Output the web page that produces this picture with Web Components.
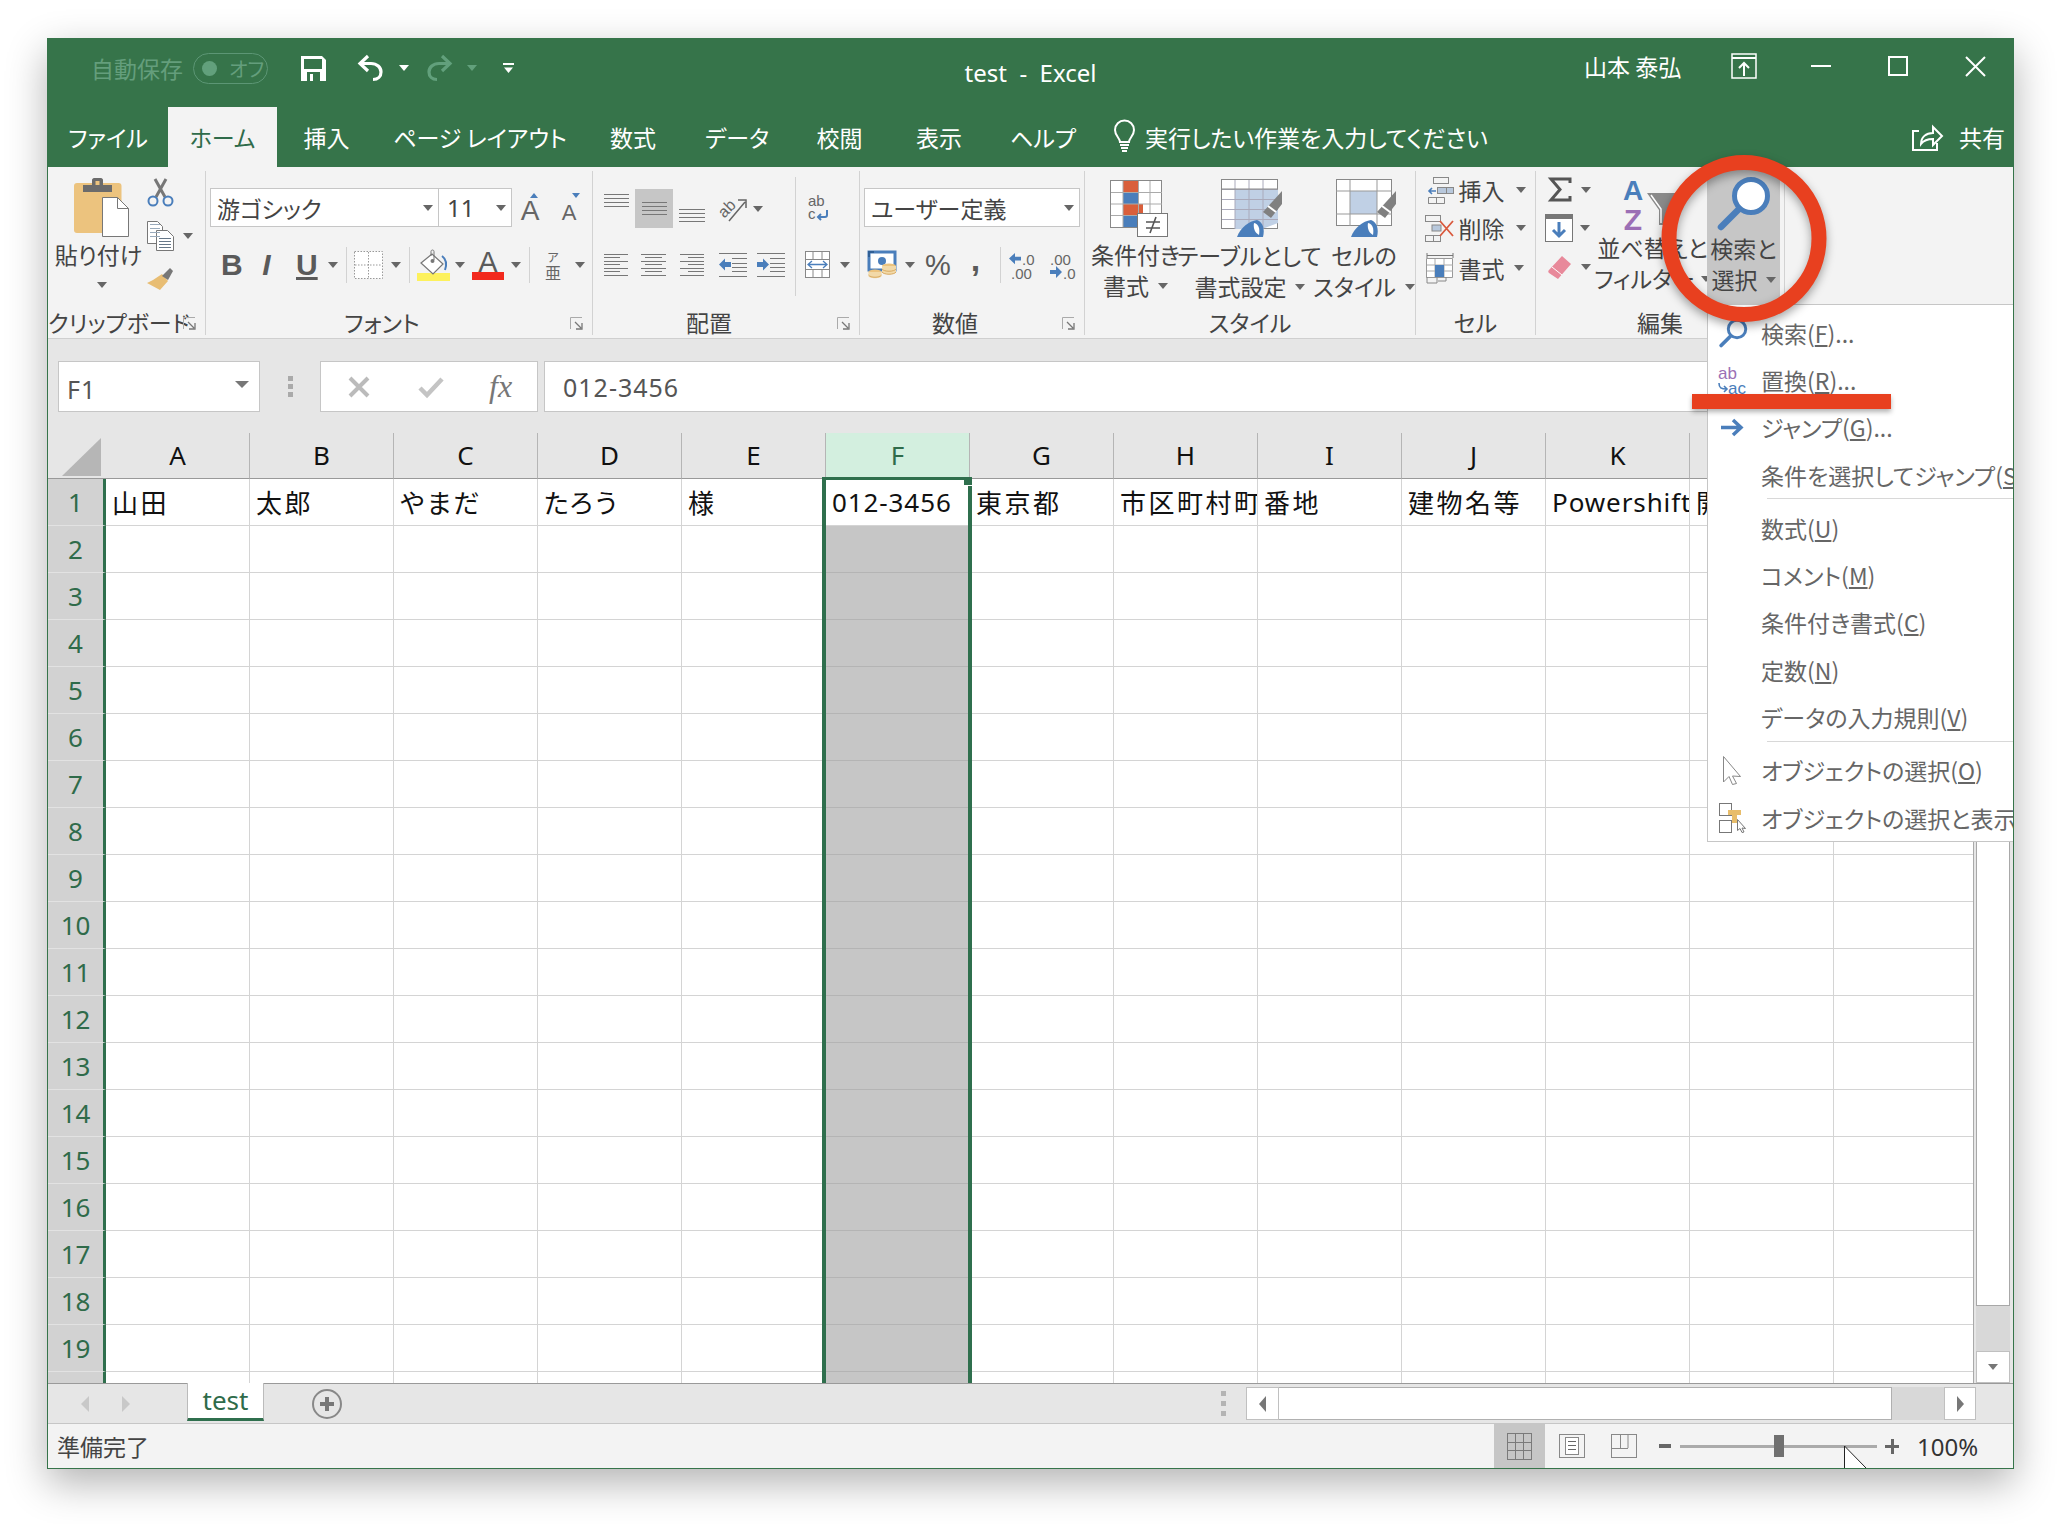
<!DOCTYPE html>
<html lang="ja">
<head>
<meta charset="utf-8">
<title>test - Excel</title>
<style>
html,body{margin:0;height:1524px;overflow:hidden;background:#fff}
body{padding:38px 0 0 47px;box-sizing:border-box;font-family:"Noto Sans CJK JP","Noto Sans",sans-serif;font-feature-settings:"palt";color:#444}
</style>
</head>
<body>
<xl-window>
  <xl-titlebar></xl-titlebar>
  <xl-tabs></xl-tabs>
  <xl-ribbon></xl-ribbon>
  <xl-formula></xl-formula>
  <xl-sheet></xl-sheet>
  <xl-sheettabs></xl-sheettabs>
  <xl-status></xl-status>
  <xl-menu>
    <xl-menu-item icon="mfind">検索(<u>F</u>)...</xl-menu-item>
    <xl-menu-item icon="mrepl">置換(<u>R</u>)...</xl-menu-item>
    <xl-menu-item icon="mjump">ジャンプ(<u>G</u>)...</xl-menu-item>
    <xl-menu-item>条件を選択してジャンプ(<u>S</u>)...</xl-menu-item>
    <xl-menu-sep></xl-menu-sep>
    <xl-menu-item>数式(<u>U</u>)</xl-menu-item>
    <xl-menu-item>コメント(<u>M</u>)</xl-menu-item>
    <xl-menu-item>条件付き書式(<u>C</u>)</xl-menu-item>
    <xl-menu-item>定数(<u>N</u>)</xl-menu-item>
    <xl-menu-item>データの入力規則(<u>V</u>)</xl-menu-item>
    <xl-menu-sep></xl-menu-sep>
    <xl-menu-item icon="mcursor">オブジェクトの選択(<u>O</u>)</xl-menu-item>
    <xl-menu-item icon="mpane">オブジェクトの選択と表示(<u>P</u>)...</xl-menu-item>
  </xl-menu>
  <xl-marks></xl-marks>
</xl-window>

<script>
const BLUE = '#4a7ebb', GR = '#777', DK = '#5a5a5a'
const lines = (w, ys, x = 0, c = GR) => ys.map(y => `<path d="M${x} ${y}.5h${w}" stroke="${c}"/>`).join('')
const brush = `<path d="M61 12v13L50 39l-8-6z" fill="#808080"/><path d="M47 27l8 6" stroke="#fff" stroke-width="2"/><path d="M16 58c3-9 12-16 20-17 6 2 8 9 6 17z" fill="${BLUE}"/><path d="M33 44c5 1 6 6 5 12-4-2-6-7-5-12z" fill="#fff"/>`

// icon name -> [width, height, svg body]
const ICONS = {
  save: [25, 25, `<path d="M0 0h21l4 4v21H0z" fill="#fff"/><rect x="3" y="3" width="18" height="10" fill="#36744a"/><rect x="6" y="16" width="13" height="9" fill="#36744a"/><rect x="9" y="18" width="3" height="7" fill="#fff"/>`],
  undo: [27, 26, `<path d="M11 1L3 8.5 11 16M3 8.5h11c6 0 10 4 10 8.500s-3 7.500-8 7.500" fill="none" stroke="#fff" stroke-width="3.200"/>`],
  redo: [27, 26, `<path d="M16 1l8 7.500L16 16M24 8.500H13c-6 0-10 4-10 8.500s3 7.500 8 7.500" fill="none" stroke="#62a07c" stroke-width="3.200"/>`],
  custom: [11, 10, `<rect width="11" height="2" fill="#fff"/><path d="M1 4.500h9L5.500 10z" fill="#fff"/>`],
  rdisp: [26, 26, `<rect x="1" y="1" width="24" height="24" fill="none" stroke="#fff" stroke-width="1.500"/><path d="M1 5h24" stroke="#fff" stroke-width="2"/><path d="M13 23V11M8 15l5-5 5 5" fill="none" stroke="#fff" stroke-width="2"/>`],
  wmin: [20, 20, `<path d="M0 10h20" stroke="#fff" stroke-width="2"/>`],
  wmax: [20, 20, `<rect x="1" y="1" width="18" height="18" fill="none" stroke="#fff" stroke-width="2"/>`],
  wclose: [21, 21, `<path d="M1 1l19 19M20 1L1 20" stroke="#fff" stroke-width="2"/>`],
  bulb: [23, 32, `<path d="M7 22c0-4-5-6-5-12a9.500 9.500 0 0 1 19 0c0 6-5 8-5 12z" fill="none" stroke="#fff" stroke-width="2"/><path d="M7 25h9M8 28h7M9 31h5" stroke="#fff" stroke-width="2"/>`],
  share: [31, 28, `<path d="M7 8H1v19h24v-7" fill="none" stroke="#fff" stroke-width="2"/><path d="M9 21c0-7 5-11 12-11V4l9 9-9 9v-6c-5 0-9 1-12 5z" fill="none" stroke="#fff" stroke-width="2"/>`],
  paste: [55, 60, `<rect y="6" width="47.500" height="50" rx="3" fill="#ecc37e"/><path d="M9 15V8h9V3c0-1 1-2 2-2h7c1 0 2 1 2 2v5h9v7z" fill="#6b6b6b"/><rect x="21.500" y="4" width="4" height="4" fill="#ecc37e"/><path d="M28.500 20.500h15l11 11v28h-26z" fill="#fff" stroke="#777"/><path d="M43.500 20.500v11h11" fill="none" stroke="#777"/>`],
  scissors: [27, 28, `<path d="M8 0l10 18M19 0L9 18" stroke="#777" stroke-width="3"/><circle cx="6" cy="22" r="4.500" fill="none" stroke="${BLUE}" stroke-width="2"/><circle cx="21" cy="22" r="4.500" fill="none" stroke="${BLUE}" stroke-width="2"/>`],
  copy: [27, 30, `<path d="M.5.500h10l5 5v17H.5z" fill="#fff" stroke="#777"/><path d="M9.500 9.500h11l6 6v14h-17z" fill="#fff" stroke="#777"/>${lines(10, [3, 7, 11, 15], 3, '#9ab')}${lines(12, [17, 20, 23, 26], 12, '#678')}`],
  brush: [26, 22, `<path d="M15 6l6 7-8 9-13-7 6-3z" fill="#e8bd73"/><path d="M15 8l8-8 3 3-5 9z" fill="#777"/>`],
  launcher: [13, 13, `<path d="M.5 12V.5H12" fill="none" stroke="#aaa"/><path d="M5 5l6 6M12 6v6H6" fill="none" stroke="#777" stroke-width="1.300"/>`],
  agrow: [24, 30, `<text x="8" y="27" font-family="Liberation Sans" font-size="28" text-anchor="middle" fill="#666">A</text><path d="M12 5h8l-4-5z" transform="translate(-4 0)" fill="${BLUE}"/>`],
  ashrink: [20, 30, `<text x="6" y="27" font-family="Liberation Sans" font-size="22" text-anchor="middle" fill="#666">A</text><path d="M9 0h8l-4 5z" fill="${BLUE}"/>`],
  borders: [29, 28, `<rect x=".5" y=".5" width="28" height="27" fill="#fff" stroke="#999" stroke-dasharray="1.500 1.500"/><path d="M14.500 1v26M1 14h27" stroke="#999" stroke-dasharray="1.500 1.500"/>`],
  fill: [33, 32, `<rect y="24" width="33" height="8" fill="#fdf15c"/><path d="M4 14L15 5l11 10-10 10z" fill="#fff" stroke="#777" stroke-width="1.200"/><path d="M14 7V2.500c0-2 3-2 3 0V11" fill="none" stroke="#777"/><circle cx="15.500" cy="12" r="2" fill="#777"/><path d="M25 7c4 3 5 8 3 14" fill="none" stroke="${BLUE}" stroke-width="2"/>`],
  acolor: [32, 29, `<text x="16" y="21" font-family="Liberation Sans" font-size="29" text-anchor="middle" fill="#5a5a5a">A</text><rect y="21" width="32" height="8" fill="#f2291d"/>`],
  furi: [14, 27, `<text x="7" y="10" font-family="Noto Sans CJK JP" font-size="12" text-anchor="middle" fill="#666">ア</text><text x="7" y="27" font-family="Noto Sans CJK JP" font-size="16" text-anchor="middle" fill="#666">亜</text>`],
  atop: [25, 39, lines(25, [5, 9, 13, 17])],
  amid: [25, 39, lines(25, [13, 17, 21, 25])],
  abot: [26, 39, lines(26, [20, 24, 28, 32])],
  aleft: [24, 23, lines(24, [0, 7, 14, 21]) + lines(16, [3, 10, 17])],
  acenter: [25, 23, lines(25, [0, 7, 14, 21]) + lines(17, [3, 10, 17], 4)],
  aright: [24, 23, lines(24, [0, 7, 14, 21]) + lines(16, [3, 10, 17], 8)],
  outdent: [28, 24, lines(28, [0, 23]) + lines(15, [5, 10, 14, 18], 13) + `<path d="M0 11.500l6-6v3.500h6v5H6v3.500z" fill="${BLUE}"/>`],
  indent: [28, 24, lines(28, [0, 23]) + lines(15, [5, 10, 14, 18], 13) + `<path d="M12 11.500l-6-6v3.500H0v5h6v3.500z" fill="${BLUE}"/>`],
  orient: [28, 28, `<text x="2" y="20" font-family="Liberation Sans" font-size="16" fill="#666" transform="rotate(-45 8 18)">ab</text><path d="M10 26L26 7M19 5h8v8" fill="none" stroke="#666" stroke-width="1.500"/>`],
  wrap: [20, 25, `<text x="0" y="11" font-family="Liberation Sans" font-size="15" fill="#666">ab</text><text x="0" y="24" font-family="Liberation Sans" font-size="15" fill="#666">c</text><path d="M19 15v5c0 1-1 2-2 2h-7M13 19l-3 3 3 3" fill="none" stroke="${BLUE}" stroke-width="2"/>`],
  merge: [25, 27, `<rect x=".5" y=".5" width="24" height="26" fill="#fff" stroke="#888"/><path d="M1 8.500h24M1 18.500h24M8 1v7M17 1v7M8 19v7M17 19v7" stroke="#888"/><path d="M3 13.500h19M7 10l-4 3.500L7 17M18 10l4 3.500-4 3.500" fill="none" stroke="${BLUE}" stroke-width="1.300"/>`],
  currency: [29, 28, `<rect x="1" y="1" width="26" height="18" fill="#fff" stroke="${BLUE}" stroke-width="3"/><circle cx="14" cy="10" r="4" fill="${BLUE}"/><path d="M6 1h-5v5M22 19h5v-5" fill="none" stroke="#2f5f95" stroke-width="2"/><ellipse cx="21" cy="15" rx="7" ry="2.500" fill="#ecc37e"/><path d="M14 15v6c0 3 14 3 14 0v-6" fill="#f2d9a8"/><path d="M14 18c2 3 12 3 14 0M14 21c2 3 12 3 14 0" fill="none" stroke="#d8aa62"/><ellipse cx="7" cy="21" rx="6.500" ry="2.500" fill="#ecc37e"/><path d="M.5 21v4c0 3 13 3 13 0v-4" fill="#f2d9a8"/><path d="M.5 24c2 3 11 3 13 0" fill="none" stroke="#d8aa62"/>`],
  incdec: [28, 28, `<path d="M0 8l6-6v4h6v4H6v4z" fill="${BLUE}" transform="scale(1 .95)"/><text x="13" y="14" font-family="Liberation Sans" font-size="15" fill="#666">.0</text><text x="2" y="28" font-family="Liberation Sans" font-size="15" fill="#666">.00</text>`],
  decdec: [25, 28, `<text x="0" y="14" font-family="Liberation Sans" font-size="15" fill="#666">.00</text><path d="M0 19h6v-4l6 6-6 6v-4H0z" fill="${BLUE}"/><text x="13" y="28" font-family="Liberation Sans" font-size="15" fill="#666">.0</text>`],
  cond: [58, 57, `<rect x=".5" y=".5" width="51" height="47" fill="#fff" stroke="#888"/><rect x="13" y="1" width="15" height="11.500" fill="#d95f3b"/><rect x="13" y="12.500" width="15" height="11.500" fill="${BLUE}"/><rect x="13" y="24" width="20" height="11.500" fill="#d95f3b"/><rect x="13" y="35.500" width="15" height="11.500" fill="${BLUE}"/><path d="M13 1v46M28.500 1v46M40 1v33M1 12.500h51M1 24h51M1 35.500h51" stroke="#aaa"/><rect x="27.500" y="33.500" width="30" height="23" fill="#fff" stroke="#777"/><path d="M36 42h14M36 48h14M46 37l-6 16" stroke="#555" stroke-width="1.600"/>`],
  tbl: [61, 58, `<rect x=".5" y=".5" width="56" height="49" fill="#fff" stroke="#888"/><path d="M14 10h43v34L41 50H14z" fill="#c0d0e5"/><path d="M14 1v49M28 1v49M42 1v49M1 10.500h56M1 20.500h56M1 30.500h56M1 40.500h56" stroke="#aab" /><path d="M1 10h56" stroke="#888"/>${brush}`],
  cellst: [60, 59, `<g transform="translate(-1 1)"><rect x="1.500" y=".5" width="55" height="46" fill="#fff" stroke="#888"/><rect x="15" y="12" width="27" height="23" fill="#c0d0e5"/><path d="M15 1v46M42 1v46M1 12h56M1 35h56" stroke="#999"/>${brush}</g>`],
  cins: [26, 27, `<g fill="none" stroke="#888"><rect x="5.500" y=".5" width="15" height="6"/><rect x="18.500" y="10.500" width="7" height="6" fill="#b8c8dc"/><rect x="9.500" y="10.500" width="9" height="6" fill="#b8c8dc"/><path d="M.5 20.500h16v6H.5zM8.500 20.500v6M.5 26.500h16"/></g><path d="M8 14H1M4 11l-3 3 3 3" fill="none" stroke="${BLUE}" stroke-width="1.600"/>`],
  cdel: [30, 27, `<g fill="none" stroke="#888"><rect x=".5" y=".5" width="15" height="6"/><rect x=".5" y="20.500" width="15" height="6"/><path d="M8.500 20.500v6"/></g><rect x="7" y="10" width="9" height="6" fill="#b8c8dc" stroke="#888"/><path d="M15 6l13 15M28 6L15 21" stroke="#d9593d" stroke-width="1.800"/>`],
  cfmt: [28, 31, `<path d="M.5 5.500h26v19h-26z" fill="#fff" stroke="#999"/><path d="M9 6v18M18 6v18M1 12h26M1 18h26" stroke="#aaa"/><rect x="9" y="12" width="9" height="12" fill="${BLUE}"/><path d="M1 2.500h26M1 0v5M27 0v5" stroke="#777"/><path d="M1 24v6h10v-6M12 28h8v-4" fill="none" stroke="#888"/>`],
  sum: [23, 25, `<path d="M22 6V2H3l9 10.500L3 23h19v-4" fill="none" stroke="#555" stroke-width="3"/>`],
  fdown: [28, 28, `<rect x=".5" y=".5" width="27" height="27" fill="#fff" stroke="#777"/><rect width="28" height="5" fill="#777"/><path d="M14 8v14M8 16l6 6 6-6" fill="none" stroke="${BLUE}" stroke-width="3"/>`],
  eraser: [23, 23, `<path d="M14 0l9 8-13 15-9-6c-1-1-1-2 0-3z" fill="#e8899a"/><path d="M4 11l10 8" stroke="#fff"/>`],
  sortf: [57, 50, `<text x="10" y="20" font-family="Liberation Sans" font-weight="bold" font-size="28" text-anchor="middle" fill="${BLUE}">A</text><text x="10" y="50" font-family="Liberation Sans" font-weight="bold" font-size="30" text-anchor="middle" fill="#9b6fb5">Z</text><path d="M24 13h33L45 30v15H36V30z" fill="#8a8a8a"/><path d="M28 15l10 14v14" fill="none" stroke="#fff" stroke-width="1.500"/>`],
  find: [53, 53, `<circle cx="34" cy="19" r="16.500" fill="#fff" stroke="${BLUE}" stroke-width="5"/><path d="M22 32L4 50" stroke="${BLUE}" stroke-width="6.500" stroke-linecap="round"/>`],
  mfind: [28, 28, `<g transform="scale(.53)"><circle cx="34" cy="19" r="16.500" fill="#fff" stroke="${BLUE}" stroke-width="5.500"/><path d="M22 32L4 50" stroke="${BLUE}" stroke-width="7" stroke-linecap="round"/></g>`],
  mrepl: [30, 30, `<text x="0" y="14" font-family="Liberation Sans" font-size="17" fill="#9b6fb5">ab</text><text x="10" y="29" font-family="Liberation Sans" font-size="17" fill="${BLUE}">ac</text><path d="M1 18c0 5 2 6 8 6M6 21l3 3-3 3" fill="none" stroke="${BLUE}" stroke-width="1.600"/>`],
  mjump: [23, 17, `<path d="M0 8.500h19M12 1l8 7.500-8 7.500" fill="none" stroke="${BLUE}" stroke-width="3.500"/>`],
  mcursor: [19, 29, `<path d="M.5.500l17 20-8-.5 4 7.500-4 1-3.500-8L.5 26z" fill="#fff" stroke="#888"/>`],
  mpane: [28, 30, `<rect x=".5" y=".5" width="12" height="12" fill="#fff" stroke="#777"/><rect x=".5" y="17.500" width="12" height="12" fill="#fff" stroke="#777"/><path d="M9 7h13v5h-4v8h-5v-8H9z" fill="#e8bd6a"/><path d="M18.500 16.500l8 9-3.500-.5 2 4-2 .5-2-4-2.500 2z" fill="#fff" stroke="#777"/>`],
  x: [22, 22, `<path d="M2 2l18 18M20 2L2 20" stroke="#bbb" stroke-width="4"/>`],
  check: [26, 22, `<path d="M2 12l7 7L24 3" fill="none" stroke="#c4c4c4" stroke-width="4.500"/>`],
  plus: [30, 30, `<circle cx="15" cy="15" r="14" fill="none" stroke="#888" stroke-width="2"/><path d="M15 8v14M8 15h14" stroke="#777" stroke-width="4"/>`],
  vnorm: [25, 27, `<rect x=".5" y=".5" width="24" height="26" fill="none" stroke="#7a7a7a"/><path d="M8.500 1v25M16.500 1v25M1 9.500h23M1 17.500h23" stroke="#7a7a7a"/>`],
  vpage: [26, 24, `<rect x=".5" y=".5" width="25" height="23" fill="none" stroke="#888"/><rect x="6.500" y="3.500" width="13" height="17" fill="#fff" stroke="#888"/><path d="M9 7.500h8M9 11.500h8M9 15.500h8" stroke="#666"/>`],
  vbreak: [26, 24, `<rect x=".5" y=".5" width="25" height="23" fill="none" stroke="#888"/><path d="M1 14.500h16M17 1v13M9.500 1v13" stroke="#888"/>`]
}

class XlIcon extends HTMLElement {
  connectedCallback() {
    if (this.shadowRoot) return
    const [w, h, body] = ICONS[this.getAttribute('n')]
    this.attachShadow({ mode: 'open' }).innerHTML = `<style>:host{display:block;flex:none;line-height:0}</style>
      <svg width="${w}" height="${h}" viewBox="0 0 ${w} ${h}" style="overflow:visible">${body}</svg>`
  }
}
customElements.define('xl-icon', XlIcon)

class XlCaret extends HTMLElement {
  constructor() {
    super()
    this.attachShadow({ mode: 'open' }).innerHTML = `<style>
      :host{display:block;flex:none;width:0;height:0;border-left:5px solid transparent;border-right:5px solid transparent;border-top:6px solid var(--caret,#666)}
    </style>`
  }
}
customElements.define('xl-caret', XlCaret)

class XlWindow extends HTMLElement {
  constructor() {
    super()
    this.attachShadow({ mode: 'open' }).innerHTML = `<style>
      :host{display:flex;flex-direction:column;position:relative;box-sizing:border-box;width:1967px;height:1431px;background:#f3f3f3;border:1px solid #36744a;box-shadow:0 14px 38px rgba(0,0,0,.3)}
    </style><slot></slot>`
  }
}
customElements.define('xl-window', XlWindow)

class XlTitlebar extends HTMLElement {
  constructor() {
    super()
    this.attachShadow({ mode: 'open' }).innerHTML = `<style>
      :host{display:flex;align-items:center;height:68px;box-sizing:border-box;padding-bottom:10px;background:#36744a;color:#fff;font-size:23px;--caret:#fff}
      .auto{margin-left:43px;width:94px;color:#649e7c;white-space:nowrap}
      .pill{margin-left:8px;width:75px;height:31px;box-sizing:border-box;border:1px solid #5c9675;border-radius:16px;display:flex;align-items:center;color:#649e7c;font-size:20px}
      .pill i{display:block;width:15px;height:15px;border-radius:50%;background:#62a07c;margin:0 12px 0 8px}
      .title{margin:8px 0 0 444px;width:145px;text-align:center;white-space:pre;font-family:"Noto Sans","Noto Sans CJK JP",sans-serif;font-size:24px}
      .user{margin-left:481px;width:101px;white-space:nowrap;margin-top:-4px}
    </style>
    <span class="auto">自動保存</span>
    <span class="pill"><i></i>オフ</span>
    <xl-icon n="save" style="margin-left:33px"></xl-icon>
    <xl-icon n="undo" style="margin-left:31px"></xl-icon>
    <xl-caret style="margin-left:15px"></xl-caret>
    <xl-icon n="redo" style="margin-left:17px"></xl-icon>
    <xl-caret style="margin-left:14px;--caret:#62a07c"></xl-caret>
    <xl-icon n="custom" style="margin-left:26px"></xl-icon>
    <span class="title">test  -  Excel</span>
    <span class="user">山本 泰弘</span>
    <xl-icon n="rdisp" style="margin:-4px 0 0 46px"></xl-icon>
    <xl-icon n="wmin" style="margin:-4px 0 0 54px"></xl-icon>
    <xl-icon n="wmax" style="margin:-4px 0 0 57px"></xl-icon>
    <xl-icon n="wclose" style="margin:-4px 0 0 57px"></xl-icon>`
  }
}
customElements.define('xl-titlebar', XlTitlebar)

class XlTabs extends HTMLElement {
  constructor() {
    super()
    const tabs = [['ファイル', 120], ['ホーム', 109], ['挿入', 99], ['ページ レイアウト', 208], ['数式', 98], ['データ', 110], ['校閲', 95], ['表示', 104], ['ヘルプ', 104]]
    this.attachShadow({ mode: 'open' }).innerHTML = `<style>
      :host{display:flex;align-items:center;height:60px;background:#36744a;color:#fff;font-size:23px}
      .t{height:60px;line-height:60px;text-align:center;white-space:pre;flex:none}
      .on{background:#f3f3f3;color:#2f6b4a}
      .ask{margin-left:9px;white-space:nowrap}
      .shr{margin-left:16px;width:45px;margin-right:9px;white-space:nowrap}
    </style>
    ${tabs.map(([t, w], i) => `<div class="t${i == 1 ? ' on' : ''}" style="width:${w}px">${t}</div>`).join('')}
    <xl-icon n="bulb" style="margin:-2px 0 0 18px"></xl-icon>
    <span class="ask">実行したい作業を入力してください</span>
    <xl-icon n="share" style="margin-left:auto"></xl-icon>
    <span class="shr">共有</span>`
  }
}
customElements.define('xl-tabs', XlTabs)

class XlGroup extends HTMLElement {
  constructor() {
    super()
    this.attachShadow({ mode: 'open' })
  }
  connectedCallback() {
    if (this.shadowRoot.firstChild) return
    const launch = this.hasAttribute('launch')
    this.shadowRoot.innerHTML = `<style>
      :host{display:flex;flex-direction:column;flex:none;box-sizing:border-box;height:164px;border-right:1px solid #d2d2d2}
      .body{height:135px;display:flex}
      .lab{position:relative;height:26px;margin-top:3px;line-height:26px;text-align:center;font-size:23px;color:#444;box-sizing:border-box;white-space:nowrap;${launch ? 'padding-right:34px' : ''}}
      .lab xl-icon{position:absolute;right:9px;top:8px}
    </style>
    <div class="body"><slot></slot></div>
    <div class="lab">${this.getAttribute('label')}${launch ? '<xl-icon n="launcher"></xl-icon>' : ''}</div>`
  }
}
customElements.define('xl-group', XlGroup)

class XlCombo extends HTMLElement {
  constructor() {
    super()
    this.attachShadow({ mode: 'open' }).innerHTML = `<style>
      :host{display:flex;align-items:center;flex:none;box-sizing:border-box;height:39px;background:#fff;border:1px solid #c6c6c6;font-size:23px;color:#444;padding:0 5px 0 6px;white-space:nowrap}
      xl-caret{margin-left:auto}
    </style><slot></slot><xl-caret></xl-caret>`
  }
}
customElements.define('xl-combo', XlCombo)

class XlRibbon extends HTMLElement {
  constructor() {
    super()
    this.attachShadow({ mode: 'open' }).innerHTML = `<style>
      :host{display:flex;box-sizing:border-box;height:172px;padding-top:4px;background:#f3f3f3;border-bottom:1px solid #cfcfcf;flex:none}
      .row{display:flex;align-items:center}
      .col{display:flex;flex-direction:column}
      .lbl{font-size:23px;line-height:31px;color:#444;white-space:nowrap;text-align:center}
      .sep{width:1px;height:36px;background:#d2d2d2;flex:none}
      .tb{flex:none;text-align:center;color:#5a5a5a;font-family:"Liberation Sans",sans-serif;font-size:30px;line-height:36px}
      .sel{background:#c6c6c6;flex:none}
    </style>
    <xl-group label="クリップボード" launch style="width:158px">
      <div class="col" style="width:99px;align-items:flex-start">
        <xl-icon n="paste" style="margin:6px 0 0 26px"></xl-icon>
        <div class="lbl" style="width:99px;margin-top:2px;padding-left:1px">貼り付け</div>
        <xl-caret style="margin:12px 0 0 49px"></xl-caret>
      </div>
      <div class="col">
        <xl-icon n="scissors" style="margin-top:8px"></xl-icon>
        <div class="row" style="margin-top:14px"><xl-icon n="copy"></xl-icon><xl-caret style="margin-left:9px"></xl-caret></div>
        <xl-icon n="brush" style="margin-top:17px"></xl-icon>
      </div>
    </xl-group>

    <xl-group label="フォント" launch style="width:387px">
      <div class="col">
        <div class="row" style="margin-top:17px">
          <xl-combo style="margin-left:4px;width:229px">游ゴシック</xl-combo>
          <xl-combo style="width:74px;margin-left:-1px;padding-left:8px;font-size:24px;font-family:'Noto Sans',sans-serif">11</xl-combo>
          <xl-icon n="agrow" style="margin-left:10px"></xl-icon>
          <xl-icon n="ashrink" style="margin-left:17px"></xl-icon>
        </div>
        <div class="row" style="margin-top:20px;height:36px">
          <span class="tb" style="margin-left:15px;width:16px;font-weight:bold">B</span>
          <span class="tb" style="margin-left:23px;width:13px;font-weight:bold;font-style:italic">I</span>
          <span class="tb" style="margin-left:23px;width:17px;font-weight:bold;text-decoration:underline">U</span>
          <xl-caret style="margin-left:15px"></xl-caret>
          <span class="sep" style="margin-left:8px"></span>
          <xl-icon n="borders" style="margin-left:7px"></xl-icon>
          <xl-caret style="margin-left:8px"></xl-caret>
          <span class="sep" style="margin-left:8px"></span>
          <xl-icon n="fill" style="margin-left:7px"></xl-icon>
          <xl-caret style="margin-left:5px"></xl-caret>
          <xl-icon n="acolor" style="margin-left:7px"></xl-icon>
          <xl-caret style="margin-left:7px"></xl-caret>
          <span class="sep" style="margin-left:8px"></span>
          <xl-icon n="furi" style="margin-left:16px"></xl-icon>
          <xl-caret style="margin-left:15px"></xl-caret>
        </div>
      </div>
    </xl-group>

    <xl-group label="配置" launch style="width:267px">
      <div class="col" style="width:202px">
        <div class="row" style="margin-top:18px">
          <xl-icon n="atop" style="margin-left:11px"></xl-icon>
          <div class="sel" style="margin-left:6px;width:38px;height:39px;display:flex;justify-content:center"><xl-icon n="amid"></xl-icon></div>
          <xl-icon n="abot" style="margin-left:6px"></xl-icon>
          <xl-icon n="orient" style="margin-left:14px"></xl-icon>
          <xl-caret style="margin-left:6px"></xl-caret>
        </div>
        <div class="row" style="margin-top:19px;height:36px">
          <xl-icon n="aleft" style="margin-left:11px"></xl-icon>
          <xl-icon n="acenter" style="margin-left:13px"></xl-icon>
          <xl-icon n="aright" style="margin-left:14px"></xl-icon>
          <xl-icon n="outdent" style="margin-left:15px"></xl-icon>
          <xl-icon n="indent" style="margin-left:10px"></xl-icon>
        </div>
      </div>
      <span class="sep" style="height:119px;margin-top:6px"></span>
      <div class="col">
        <xl-icon n="wrap" style="margin:24px 0 0 12px"></xl-icon>
        <div class="row" style="margin-top:31px"><xl-icon n="merge" style="margin-left:9px"></xl-icon><xl-caret style="margin-left:10px"></xl-caret></div>
      </div>
    </xl-group>

    <xl-group label="数値" launch style="width:225px">
      <div class="col">
        <xl-combo style="margin:17px 0 0 4px;width:216px">ユーザー定義</xl-combo>
        <div class="row" style="margin-top:20px;height:36px">
          <xl-icon n="currency" style="margin-left:8px"></xl-icon>
          <xl-caret style="margin-left:8px"></xl-caret>
          <span class="tb" style="margin-left:10px;width:25px;font-size:29px">%</span>
          <span class="tb" style="margin-left:20px;width:11px;font-size:34px;font-weight:bold;margin-top:-12px">,</span>
          <span class="sep" style="margin-left:19px"></span>
          <xl-icon n="incdec" style="margin-left:8px"></xl-icon>
          <xl-icon n="decdec" style="margin-left:13px"></xl-icon>
        </div>
      </div>
    </xl-group>

    <xl-group label="スタイル" style="width:331px">
      <div class="col" style="width:101px;align-items:center">
        <xl-icon n="cond" style="margin:9px 0 0 7px"></xl-icon>
        <div class="lbl" style="margin-top:2px">条件付き</div>
        <div class="row lbl">書式<xl-caret style="margin-left:9px"></xl-caret></div>
      </div>
      <div class="col" style="width:127px;align-items:center">
        <xl-icon n="tbl" style="margin:8px 0 0 4px"></xl-icon>
        <div class="lbl" style="margin-top:3px">テーブルとして</div>
        <div class="row lbl">書式設定<xl-caret style="margin-left:8px"></xl-caret></div>
      </div>
      <div class="col" style="width:102px;align-items:center">
        <xl-icon n="cellst" style="margin:7px 0 0 4px"></xl-icon>
        <div class="lbl" style="margin-top:3px">セルの</div>
        <div class="row lbl">スタイル<xl-caret style="margin-left:9px"></xl-caret></div>
      </div>
    </xl-group>

    <xl-group label="セル" style="width:120px">
      <div class="col">
        <div class="row lbl" style="height:38px"><div style="width:39px;padding-left:10px;box-sizing:border-box"><xl-icon n="cins"></xl-icon></div><span style="margin-left:3px;width:47px">挿入</span><xl-caret style="margin-left:11px"></xl-caret></div>
        <div class="row lbl" style="height:38px"><div style="width:39px;padding-left:9px;box-sizing:border-box"><xl-icon n="cdel"></xl-icon></div><span style="margin-left:3px;width:47px">削除</span><xl-caret style="margin-left:11px"></xl-caret></div>
        <div class="row lbl" style="height:42px"><div style="width:39px;padding-left:9px;box-sizing:border-box"><xl-icon n="cfmt"></xl-icon></div><span style="margin-left:3px;width:47px">書式</span><xl-caret style="margin-left:9px"></xl-caret></div>
      </div>
    </xl-group>

    <xl-group label="編集" style="width:249px">
      <div class="col" style="width:62px">
        <div class="row" style="height:37px;padding-left:12px"><xl-icon n="sum"></xl-icon><xl-caret style="margin-left:10px"></xl-caret></div>
        <div class="row" style="height:40px;padding-left:9px"><xl-icon n="fdown"></xl-icon><xl-caret style="margin-left:7px"></xl-caret></div>
        <div class="row" style="height:38px;padding-left:12px"><xl-icon n="eraser"></xl-icon><xl-caret style="margin-left:10px"></xl-caret></div>
      </div>
      <div class="col" style="width:109px;align-items:center">
        <xl-icon n="sortf" style="margin:9px 0 0 -2px"></xl-icon>
        <div class="lbl" style="margin-top:2px">並べ替えと</div>
        <div class="row lbl">フィルター<xl-caret style="margin-left:6px"></xl-caret></div>
      </div>
      <div class="col sel" style="width:73px;height:134px;margin-top:-1px;align-items:center">
        <xl-icon n="find" style="margin-top:7px"></xl-icon>
        <div class="lbl" style="margin-top:3px">検索と</div>
        <div class="row lbl">選択<xl-caret style="margin-left:8px"></xl-caret></div>
      </div>
    </xl-group>`
  }
}
customElements.define('xl-ribbon', XlRibbon)

class XlFormula extends HTMLElement {
  constructor() {
    super()
    this.attachShadow({ mode: 'open' }).innerHTML = `<style>
      :host{display:flex;align-items:flex-start;height:94px;box-sizing:border-box;padding:22px 0 0 10px;background:#e6e6e6;flex:none}
      .box{box-sizing:border-box;height:51px;background:#fff;border:1px solid #c6c6c6;display:flex;align-items:center;flex:none}
      .name{width:202px;padding:0 10px 0 8px;font:25px "Noto Sans",sans-serif;letter-spacing:1px;color:#555;padding-top:5px}
      .name xl-caret{margin:-10px 0 0 auto;border-left-width:7px;border-right-width:7px;border-top-width:7px;--caret:#777}
      .dots{width:60px;flex:none;display:flex;flex-direction:column;align-items:center;gap:3px;padding-top:15px}
      .dots i{display:block;width:5px;height:5px;background:#aaa}
      .fx{font:italic 32px "Liberation Serif",serif;color:#777;margin-left:45px}
      .val{flex:1;margin:0 4px 0 6px;padding-left:18px;font:25px "Noto Sans",sans-serif;letter-spacing:1px;color:#555}
    </style>
    <div class="box name">F1<xl-caret></xl-caret></div>
    <div class="dots"><i></i><i></i><i></i></div>
    <div class="box" style="width:218px">
      <xl-icon n="x" style="margin-left:27px"></xl-icon>
      <xl-icon n="check" style="margin-left:48px"></xl-icon>
      <span class="fx"><i>fx</i></span>
    </div>
    <div class="box val">012-3456</div>`
  }
}
customElements.define('xl-formula', XlFormula)

class XlGrid extends HTMLElement {
  constructor() {
    super()
    const cols = 'ABCDEFGHIJKL'.split('')
    const row1 = ['山田', '太郎', 'やまだ', 'たろう', '様', '012-3456', '東京都', '市区町村町', '番地', '建物名等', 'Powershift', '開']
    let html = `<div class="corner"><svg width="58" height="46"><path d="M15 43h39V5z" fill="#b6b6b6"/></svg></div>`
    cols.forEach(c => html += `<div class="ch${c == 'F' ? ' csel' : ''}">${c}</div>`)
    html += `<div class="ch" style="border:0"></div>`
    for (let r = 1; r <= 20; r++) {
      html += `<div class="rh">${r}</div>`
      cols.forEach((c, i) => {
        const latin = r == 1 && (i == 5 || i == 10)
        const txt = r == 1 ? row1[i] : ''
        const cls = c == 'F' && r > 1 ? 'c gray' : 'c'
        html += `<div class="${cls}${latin ? ' lat' : ''}">${txt}</div>`
      })
      html += `<div class="c" style="border-right:0"></div>`
    }
    this.attachShadow({ mode: 'open' }).innerHTML = `<style>
      :host{display:grid;position:relative;flex:1;overflow:hidden;grid-template-columns:58px repeat(12,144px) 1fr;grid-template-rows:46px repeat(20,47px);background:#fff;font-size:26px;color:#111;font-feature-settings:"normal";border-right:1px solid #aaa;box-sizing:border-box}
      .corner{background:#e6e6e6;border-bottom:1px solid #999;margin-left:-1px}
      .ch{background:#e6e6e6;border-right:1px solid #b5b5b5;border-bottom:1px solid #999;text-align:center;line-height:44px;font-size:26px;font-family:"Noto Sans","Noto Sans CJK JP",sans-serif}
      .csel{background:#d3efdf;color:#2f6b4a}
      .rh{background:#d2d2d2;border-right:3px solid #2f6f4d;border-bottom:1px solid #e2e2e2;color:#2f6b4a;text-align:center;line-height:46px;font-family:"Noto Sans",sans-serif;font-size:26px}
      .c{border-right:1px solid #d4d4d4;border-bottom:1px solid #d4d4d4;line-height:46px;padding-left:6px;white-space:nowrap;overflow:hidden;letter-spacing:2.5px}
      .lat{letter-spacing:.9px;font-family:"Noto Sans",sans-serif}
      .gray{background:#c6c6c6;border-right-color:#c6c6c6;border-bottom-color:#b4b4b4}
      .cur{position:absolute;left:774px;top:44px;bottom:-4px;width:150px;box-sizing:border-box;border:solid #2f6f4d;border-width:3px 4px 0}
      .cur i{position:absolute;right:-4px;top:-3px;width:8px;height:8px;background:#2f6f4d;box-shadow:0 1px 0 #fff}
    </style>${html}<div class="cur"><i></i></div>`
  }
}
customElements.define('xl-grid', XlGrid)

class XlVscroll extends HTMLElement {
  constructor() {
    super()
    this.attachShadow({ mode: 'open' }).innerHTML = `<style>
      :host{display:flex;flex-direction:column;flex:none;width:39px;box-sizing:border-box;padding:0 3px 0 2px;background:#e6e6e6}
      .btn{height:32px;box-sizing:border-box;background:#fff;border:1px solid #c0c0c0;display:flex;align-items:center;justify-content:center;--caret:#777}
      .thumb{height:841px;box-sizing:border-box;background:#fff;border:1px solid #a8a8a8}
      .track{flex:1;background:#d8d8d8}
    </style>
    <div class="btn"></div><div class="thumb"></div><div class="track"></div><div class="btn"><xl-caret></xl-caret></div>`
  }
}
customElements.define('xl-vscroll', XlVscroll)

class XlSheet extends HTMLElement {
  constructor() {
    super()
    this.attachShadow({ mode: 'open' }).innerHTML = `<style>
      :host{display:flex;height:950px;flex:none;background:#e6e6e6}
    </style><xl-grid></xl-grid><xl-vscroll></xl-vscroll>`
  }
}
customElements.define('xl-sheet', XlSheet)

class XlSheettabs extends HTMLElement {
  constructor() {
    super()
    this.attachShadow({ mode: 'open' }).innerHTML = `<style>
      :host{display:flex;align-items:center;height:41px;box-sizing:border-box;flex:none;background:#e6e6e6;border-top:1px solid #9a9a9a;border-bottom:1px solid #c6c6c6}
      .tri{width:0;height:0;border-top:8px solid transparent;border-bottom:8px solid transparent}
      .tab{align-self:flex-start;margin:-1px 0 0 57px;width:77px;height:38px;box-sizing:border-box;background:#fff;border:solid #bbb;border-width:0 1px;border-bottom:3px solid #2f6f4d;text-align:center;color:#2f6b4a;font:26px/34px "Noto Sans",sans-serif}
      .dots{margin-left:auto;display:flex;flex-direction:column;gap:5px}
      .dots i{display:block;width:5px;height:5px;background:#b4b4b4}
      .h{display:flex;margin:0 37px 0 20px;width:730px;height:33px;box-sizing:border-box;background:#d8d8d8}
      .hb{width:33px;box-sizing:border-box;background:#fff;border:1px solid #c0c0c0;display:flex;align-items:center;justify-content:center}
      .ht{width:613px;background:#fff;box-sizing:border-box;border:1px solid #b0b0b0;border-left:0}
      .hs{width:52px}
    </style>
    <div class="tri" style="margin-left:33px;border-right:8px solid #c8c8c8"></div>
    <div class="tri" style="margin-left:33px;border-left:8px solid #c8c8c8"></div>
    <div class="tab">test</div>
    <xl-icon n="plus" style="margin-left:48px"></xl-icon>
    <div class="dots"><i></i><i></i><i></i></div>
    <div class="h">
      <div class="hb"><div class="tri" style="border-right:7px solid #777"></div></div>
      <div class="ht"></div><div class="hs"></div>
      <div class="hb" style="width:32px"><div class="tri" style="border-left:7px solid #777"></div></div>
    </div>`
  }
}
customElements.define('xl-sheettabs', XlSheettabs)

class XlStatus extends HTMLElement {
  constructor() {
    super()
    this.attachShadow({ mode: 'open' }).innerHTML = `<style>
      :host{display:flex;align-items:center;height:44px;flex:none;background:#f3f3f3;font-size:23px;color:#444}
      .msg{margin-left:9px;margin-right:auto;white-space:nowrap}
      .vsel{width:51px;height:44px;background:#c6c6c6;display:flex;align-items:center;justify-content:center}
      .min{margin-left:22px;width:12px;height:4px;background:#666}
      .sl{position:relative;margin-left:9px;width:197px;height:3px;background:#aaa}
      .sl i{position:absolute;left:94px;top:-10px;width:10px;height:22px;background:#707070}
      .pl{position:relative;margin-left:8px;width:14px;height:14px}
      .pl:before,.pl:after{content:"";position:absolute;background:#666}
      .pl:before{left:0;top:6px;width:14px;height:3px}
      .pl:after{left:5.500px;top:0;width:3px;height:15px}
      .pct{margin:0 29px 0 18px;width:67px;white-space:nowrap;font:24px "Noto Sans",sans-serif;color:#333}
    </style>
    <span class="msg">準備完了</span>
    <div class="vsel"><xl-icon n="vnorm"></xl-icon></div>
    <xl-icon n="vpage" style="margin-left:14px"></xl-icon>
    <xl-icon n="vbreak" style="margin-left:26px"></xl-icon>
    <div class="min"></div>
    <div class="sl"><i></i></div>
    <div class="pl"></div>
    <span class="pct">100%</span>`
  }
}
customElements.define('xl-status', XlStatus)

class XlMenu extends HTMLElement {
  constructor() {
    super()
    this.attachShadow({ mode: 'open' }).innerHTML = `<style>
      :host{position:absolute;z-index:5;left:1659px;top:265px;right:0;height:538px;box-sizing:border-box;padding-top:4px;background:#fff;border:1px solid #c6c6c6;border-right:0;overflow:hidden;font-size:23px;color:#666}
    </style><slot></slot>`
  }
}
customElements.define('xl-menu', XlMenu)

class XlMenuItem extends HTMLElement {
  constructor() {
    super()
    this.attachShadow({ mode: 'open' })
  }
  connectedCallback() {
    if (this.shadowRoot.firstChild) return
    const ic = this.getAttribute('icon')
    this.shadowRoot.innerHTML = `<style>
      :host{display:flex;align-items:center;height:47.300px;white-space:nowrap}
      .ic{width:53px;flex:none;display:flex;justify-content:center;padding-right:4px;box-sizing:border-box}
    </style><div class="ic">${ic ? `<xl-icon n="${ic}"></xl-icon>` : ''}</div><span><slot></slot></span>`
  }
}
customElements.define('xl-menu-item', XlMenuItem)

class XlMenuSep extends HTMLElement {
  constructor() {
    super()
    this.attachShadow({ mode: 'open' }).innerHTML = `<style>
      :host{display:block;height:6px;box-sizing:border-box;margin-left:59px;border-top:1px solid #d8d8d8}
    </style>`
  }
}
customElements.define('xl-menu-sep', XlMenuSep)

// red hand-drawn marks on top of the screenshot, and the mouse arrow
class XlMarks extends HTMLElement {
  constructor() {
    super()
    this.attachShadow({ mode: 'open' }).innerHTML = `<style>
      :host{display:contents}
      .ring{position:absolute;z-index:7;left:1613px;top:116px;overflow:visible;filter:drop-shadow(0 4px 5px rgba(0,0,0,.35))}
      .bar{position:absolute;z-index:7;left:1644px;top:355px;width:199px;height:15px;background:#e8401f;box-shadow:0 3px 5px rgba(0,0,0,.3)}
      .mouse{position:absolute;z-index:7;left:1796px;top:1407px}
    </style>
    <svg class="ring" width="166" height="167"><ellipse cx="83" cy="83.500" rx="75" ry="76" fill="none" stroke="#e8401f" stroke-width="15"/></svg>
    <div class="bar"></div>
    <svg class="mouse" width="23" height="23"><path d="M.5 0v22h22z" fill="#fff"/><path d="M.5 22V0L22 22" fill="none" stroke="#222"/></svg>`
  }
}
customElements.define('xl-marks', XlMarks)
</script>
</body>
</html>
